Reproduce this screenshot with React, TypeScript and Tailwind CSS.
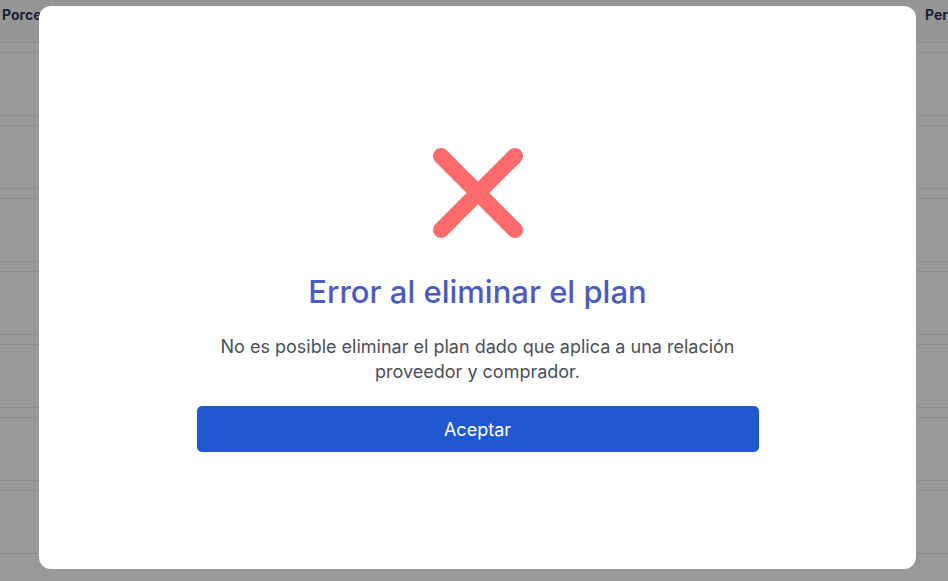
import React from 'react'

const rows = Array.from({ length: 7 }, (_, i) => i)

function ErrorModal() {
  return (
    <div className="absolute left-[39px] top-[6px] w-[877px] h-[563px] bg-white rounded-[12px] flex flex-col items-center pt-[142px]">
      {/* Error icon */}
      <svg width="90" height="90" viewBox="0 0 90 90" fill="none">
        <path d="M8 8 L82 82 M82 8 L8 82" stroke="#fe6b6b" strokeWidth="16" strokeLinecap="round" />
      </svg>

      <h2 className="mt-[35px] text-[31px] leading-[38px] font-medium text-[#4a5cc0]">
        Error al eliminar el plan
      </h2>

      <p className="mt-[23px] w-[560px] text-center text-[18px] leading-[25px] text-[#4b4f58]">
        No es posible eliminar el plan dado que aplica a una relación proveedor y comprador.
      </p>

      <button className="mt-[22px] w-[562px] h-[46px] rounded-[5px] bg-[#2258cf] text-white text-[18px] font-normal">
        Aceptar
      </button>
    </div>
  )
}

export default function App() {
  return (
    <div className="relative w-[948px] h-[581px] overflow-hidden bg-[#999999] font-['Inter',sans-serif]">
      {/* Table behind the overlay */}
      <div className="h-[43px] border-b border-[#8c8c8c] flex items-start pt-[4px] pl-[2px] bg-[#969696] whitespace-nowrap overflow-hidden">
        <span className="w-[923px] shrink-0 text-[14px] font-bold text-[#1c2230]">Porcentaje</span>
        <span className="shrink-0 text-[14px] font-bold text-[#1c2230]">Periodo</span>
      </div>
      <div className="flex flex-col">
        {rows.map((r) => (
          <div key={r} className="mt-[9px] h-[64px] border-t border-b border-[#8e8e8e]" />
        ))}
      </div>

      <ErrorModal />
    </div>
  )
}
